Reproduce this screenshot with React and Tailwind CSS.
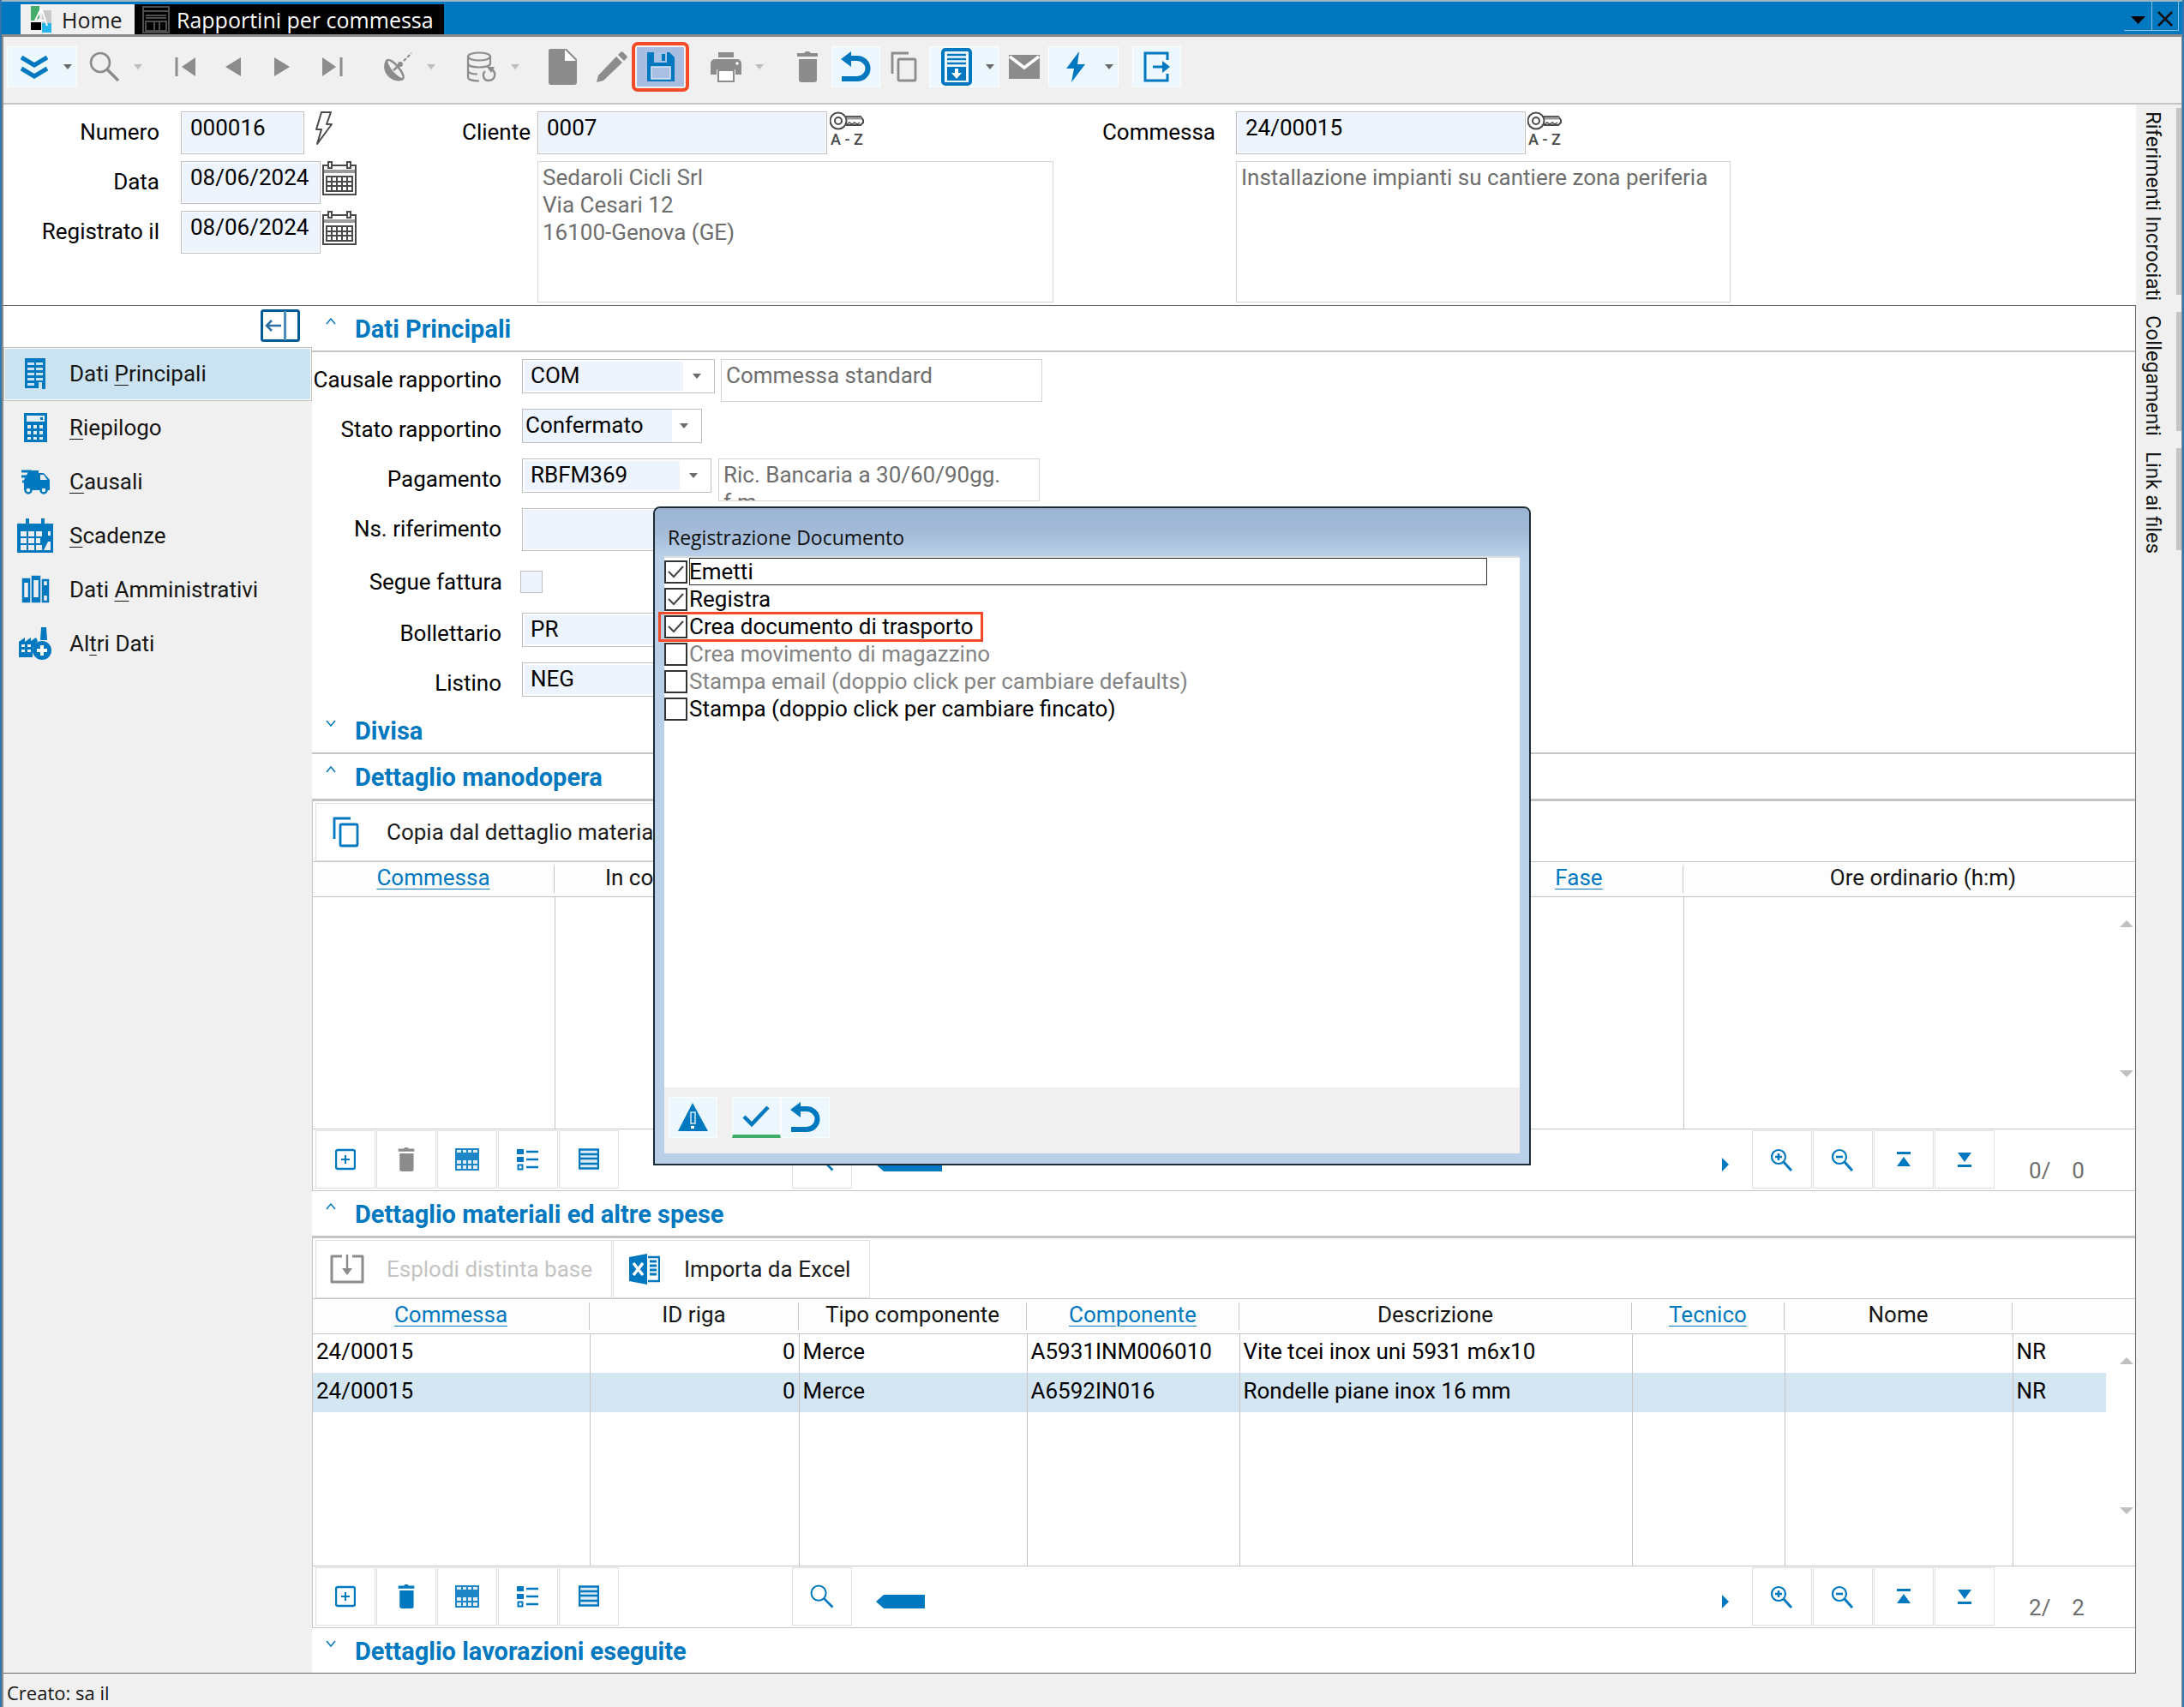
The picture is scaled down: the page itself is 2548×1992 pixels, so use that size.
import React from "react";

const BLUE = "#0078bf";
const GRAY = "#8c8c8c";

/* ---------- icons ---------- */

function Svg({ size = 36, w, h, box = "0 0 36 36", className = "", children }) {
  return (
    <svg aria-hidden="true" width={w || size} height={h || size} viewBox={box} className={"block shrink-0 " + className} fill="none">
      {children}
    </svg>
  );
}

const Caret = ({ color = "#6b6b6b" }) => (
  <Svg w={10} h={6} box="0 0 10 6">
    <path d="M0 0h10L5 6z" fill={color} />
  </Svg>
);

const DoubleDown = () => (
  <Svg>
    <path d="M3 7l15 9 15-9M3 20l15 9 15-9" stroke={BLUE} strokeWidth="5" />
  </Svg>
);

const SearchIcon = ({ color = GRAY, size = 36 }) => (
  <Svg size={size}>
    <circle cx="13" cy="13" r="11" stroke={color} strokeWidth="2.6" />
    <path d="M21 21l13 13" stroke={color} strokeWidth="3.4" />
  </Svg>
);

const FirstIcon = () => (
  <Svg>
    <path d="M7 7v22" stroke={GRAY} strokeWidth="3" />
    <path d="M29 7v22L13 18z" fill={GRAY} />
  </Svg>
);
const LastIcon = () => (
  <Svg>
    <path d="M28 7v22" stroke={GRAY} strokeWidth="3" />
    <path d="M6 7v22l16-11z" fill={GRAY} />
  </Svg>
);
const PrevIcon = () => (
  <Svg>
    <path d="M25 7v22L7 18z" fill={GRAY} />
  </Svg>
);
const NextIcon = () => (
  <Svg>
    <path d="M7 7v22l18-11z" fill={GRAY} />
  </Svg>
);

const SatelliteIcon = () => (
  <Svg>
    <path d="M5 9C1 14 1 22 6 28c5 6 13 8 19 5z" fill={GRAY} />
    <ellipse cx="15" cy="21" rx="4.5" ry="14" transform="rotate(-40 15 21)" fill="#efefef" stroke={GRAY} strokeWidth="2.4" />
    <path d="M13 22l8-7" stroke={GRAY} strokeWidth="2.4" />
    <circle cx="21" cy="15" r="3" fill={GRAY} />
    <path d="M25 11l9-9" stroke={GRAY} strokeWidth="2.2" strokeDasharray="4 2" />
  </Svg>
);

const DatabaseIcon = () => (
  <Svg>
    <ellipse cx="15" cy="6" rx="13" ry="4.5" stroke={GRAY} strokeWidth="2.2" />
    <path d="M2 6v24c0 3 6 4.500 13 4.500M28 6v9M2 14c0 3 6 4.500 13 4.500s13-1.500 13-4.500M2 22c0 3 5 4.500 11 4.500" stroke={GRAY} strokeWidth="2.2" />
    <path d="M22 23c-4 4-2 11 4 11 7 0 10-8 4-13" stroke={GRAY} strokeWidth="2.4" />
    <path d="M24 18l9 0-4 7z" fill={GRAY} />
  </Svg>
);

const FileIcon = () => (
  <Svg w={36} h={44} box="0 0 36 44">
    <path d="M3 1h19l12 12v27a3 3 0 0 1-3 3H4a3 3 0 0 1-3-3V3a2 2 0 0 1 2-2z" fill={GRAY} />
    <path d="M20 2v13h13z" fill="#fff" />
  </Svg>
);

const PencilIcon = () => (
  <Svg>
    <path d="M23 6l7 7L8 34l-8 2 2-8z" fill={GRAY} />
    <path d="M25 4l3-3c1-1 2-1 3 0l4 4c1 1 1 2 0 3l-3 3z" fill={GRAY} />
  </Svg>
);

const SaveIcon = () => (
  <Svg>
    <path d="M2 1h26l6 6v28H2z" fill={BLUE} />
    <path d="M10 1h15v12H10z" fill="#a9c3e6" />
    <path d="M19 3h4v8h-4z" fill={BLUE} />
    <path d="M7 18h22v14H7z" fill="#a9bfe3" stroke="#dbe6f5" strokeWidth="1.500" />
  </Svg>
);

const PrinterIcon = () => (
  <Svg>
    <path d="M9 1h18v6H9z" fill={GRAY} />
    <path d="M5 9h26a5 5 0 0 1 5 5v13h-7v-6H7v6H0V14a5 5 0 0 1 5-5z" fill={GRAY} />
    <path d="M9 22h18v13H9z" fill="#fff" stroke={GRAY} strokeWidth="2" />
    <circle cx="31" cy="14" r="1.800" fill="#fff" />
  </Svg>
);

const TrashIcon = ({ color = GRAY, size = 36 }) => (
  <Svg size={size}>
    <path d="M6 2h8l2-2h4l2 2h8v4H6z" fill={color} />
    <path d="M8 9h21v24a3 3 0 0 1-3 3H11a3 3 0 0 1-3-3z" fill={color} />
  </Svg>
);

const UndoIcon = () => (
  <Svg>
    <path d="M7 8h12a12 11.500 0 0 1 0 24H1" stroke={BLUE} strokeWidth="6" />
    <path d="M0 9L12 0v18z" fill={BLUE} />
  </Svg>
);

const CopyIcon = ({ color = GRAY }) => (
  <Svg>
    <path d="M3 26V2h19" stroke={color} strokeWidth="2.800" />
    <rect x="10" y="9" width="20" height="25" rx="1.500" stroke={color} strokeWidth="2.800" />
  </Svg>
);

const ArchiveIcon = () => (
  <Svg w={36} h={44} box="0 0 36 44">
    <rect x="2" y="2" width="32" height="40" rx="3" stroke={BLUE} strokeWidth="4" fill="#f2f9fe" />
    <path d="M7 8h22M7 13h22M7 18h22" stroke={BLUE} strokeWidth="2.500" />
    <path d="M7 22h22v16H7z" fill={BLUE} />
    <path d="M16 24h4v5h4l-6 7-6-7h4z" fill="#fff" />
  </Svg>
);

const MailIcon = () => (
  <Svg w={36} h={30} box="0 0 36 30">
    <path d="M0 1h36v28H0z" fill={GRAY} />
    <path d="M1 3l17 13L35 3" stroke="#fff" strokeWidth="3.500" />
  </Svg>
);

const BoltIcon = () => (
  <Svg>
    <path d="M22 0L7 20h9l-3 16 16-21h-9z" fill={BLUE} />
  </Svg>
);

const ExitIcon = () => (
  <Svg>
    <path d="M30 10V2H4v32h26v-8" stroke={BLUE} strokeWidth="3" />
    <path d="M13 18h14" stroke={BLUE} strokeWidth="3" />
    <path d="M24 11l9 7-9 7z" fill={BLUE} />
  </Svg>
);

const ZapOutline = () => (
  <Svg w={22} h={40} box="0 0 22 40">
    <path d="M8 1h11l-5 14h6L3 38l5-17H2z" stroke="#4a4a4a" strokeWidth="2" strokeLinejoin="round" />
  </Svg>
);

const CalendarIcon = () => (
  <Svg w={40} h={40} box="0 0 40 40">
    <path d="M1 5h38v34H1z" stroke="#4a4a4a" strokeWidth="2" fill="#fff" />
    <path d="M2 10h36v4H2z" fill="#9a9a9a" />
    <path d="M7 1h4v7H7zM29 1h4v7h-4z" fill="#fff" stroke="#4a4a4a" strokeWidth="2" />
    <path d="M5 18h30v17H5zM5 24h30M5 29h30M11 18v17M17 18v17M23 18v17M29 18v17" stroke="#4a4a4a" strokeWidth="2" />
  </Svg>
);

const KeyIcon = () => (
  <span className="flex w-[40px] flex-col items-center">
    <Svg w={40} h={22} box="0 0 40 22">
      <circle cx="10" cy="11" r="9.500" stroke="#4a4a4a" strokeWidth="2" />
      <circle cx="10" cy="11" r="4" stroke="#4a4a4a" strokeWidth="2" />
      <path d="M19 6h17l3 4v3l-3 3H19" stroke="#4a4a4a" strokeWidth="2" />
      <path d="M20 8h17" stroke="#9a9a9a" strokeWidth="3" />
      <path d="M20 15l3-2 3 2 3-2 3 2 3-2" stroke="#4a4a4a" strokeWidth="1.500" />
    </Svg>
    <span className="text-[18px] font-medium leading-[22px] text-[#4a4a4a]">A - Z</span>
  </span>
);

const CollapseIcon = () => (
  <Svg w={46} h={38} box="0 0 46 38">
    <rect x="1.500" y="1.500" width="43" height="35" rx="2" stroke="#005a96" strokeWidth="3" fill="#fff" />
    <path d="M28.500 2v34" stroke="#4b8fbf" strokeWidth="3" />
    <path d="M7 19h17M13 13l-6 6 6 6" stroke="#2b6fa3" strokeWidth="2.500" />
  </Svg>
);

const BuildingIcon = () => (
  <Svg w={42} h={40} box="0 0 42 40">
    <path d="M9 2h24v36h-4V30h-4v7H9z" fill={BLUE} />
    <path d="M12 7h8v3h-8zM22 7h8v3h-8zM12 13h8v3h-8zM22 13h8v3h-8zM12 19h8v3h-8zM22 19h8v3h-8zM12 25h8v3h-8zM22 25h8v3h-8zM12 31h8v3h-8z" fill="#cbe3f1" />
  </Svg>
);
const CalculatorIcon = () => (
  <Svg w={42} h={40} box="0 0 42 40">
    <path d="M8 3h27v34H8z" fill={BLUE} />
    <path d="M11 6h21v7H11z" fill="#e4eff7" />
    <path d="M27 8h3v3h-3z" fill={BLUE} />
    <path d="M12 17h4v4h-4zM19 17h4v4h-4zM26 17h4v4h-4zM12 24h4v4h-4zM19 24h4v4h-4zM26 24h4v4h-4zM12 31h4v3h-4zM19 31h4v3h-4zM26 31h4v3h-4z" fill="#e4eff7" />
  </Svg>
);
const TruckIcon = () => (
  <Svg w={42} h={40} box="0 0 42 40">
    <path d="M14 7h11v3h6l7 8v12H8V18z" fill={BLUE} />
    <path d="M5 8h12M5 14h8M6 20h6" stroke={BLUE} strokeWidth="3" />
    <path d="M27 12h4l4 6h-8z" fill="#efefef" />
    <circle cx="13" cy="30" r="3.500" fill="#efefef" stroke={BLUE} strokeWidth="2.500" />
    <circle cx="31" cy="30" r="3.500" fill="#efefef" stroke={BLUE} strokeWidth="2.500" />
  </Svg>
);
const ScheduleIcon = () => (
  <Svg w={42} h={42} box="0 0 42 42">
    <path d="M0 7h42v34H0z" fill={BLUE} />
    <path d="M12 1v8M30 1v8" stroke={BLUE} strokeWidth="4" />
    <path d="M4 16h7v6H4zM13 16h7v6h-7zM22 16h7v6h-7zM4 24h7v6H4zM13 24h7v6h-7zM22 24h5v6h-5zM4 32h7v6H4zM13 32h7v6h-7zM22 32h7v6h-7zM36 16h3v5h-3zM36 28h3v10h-8z" fill="#efefef" />
  </Svg>
);
const BindersIcon = () => (
  <Svg w={42} h={40} box="0 0 42 40">
    <path d="M7 8h7v26H7zM18 5h8v29h-8zM30 9h6v25h-6z" stroke={BLUE} strokeWidth="2.500" />
    <path d="M7 8h7v4H7zM18 5h8v4h-8zM30 15h6v12h-6zM8 29h6v4H8zM19 29h6v4h-6z" fill={BLUE} />
  </Svg>
);
const FactoryIcon = () => (
  <Svg w={42} h={42} box="0 0 42 42">
    <path d="M28 2h6l1 15h-8z" fill={BLUE} />
    <path d="M2 19l7-5v5l7-5v4l6-4 2 4-6 8v11H2z" fill={BLUE} />
    <path d="M5 22h4v3H5zM12 22h4v3h-4zM5 28h4v3H5zM12 28h4v3h-4z" fill="#efefef" />
    <circle cx="29" cy="29" r="11" fill={BLUE} />
    <path d="M27 23h4v4h4v4h-4v4h-4v-4h-4v-4h4z" fill="#fff" />
  </Svg>
);

const PlusBox = () => (
  <Svg w={24} h={26} box="0 0 24 26">
    <rect x="1" y="2" width="22" height="22" rx="2" stroke={BLUE} strokeWidth="2.400" />
    <path d="M12 8v10M7 13h10" stroke={BLUE} strokeWidth="2" />
  </Svg>
);
const TableIcon = () => (
  <Svg w={28} h={26} box="0 0 28 26">
    <path d="M0 0h28v26H0z" fill="#1c86c6" />
    <path d="M2 2h5v3H2zM9 2h4v3H9zM15 2h4v3h-4zM21 2h5v3h-5zM2 14h5v4H2zM9 14h4v4H9zM15 14h4v4h-4zM21 14h5v4h-5zM2 20h5v4H2zM9 20h4v4H9zM15 20h4v4h-4zM21 20h5v4h-5z" fill="#e1eef7" />
  </Svg>
);
const ListIcon = () => (
  <Svg w={26} h={26} box="0 0 26 26">
    <path d="M0 1h8v6H0zM0 10h8v6H0z" fill={BLUE} />
    <rect x="1.500" y="19.500" width="5" height="5" stroke={BLUE} strokeWidth="2" />
    <path d="M11 4h14M11 13h14M11 22h14" stroke={BLUE} strokeWidth="2.400" />
  </Svg>
);
const RowsIcon = () => (
  <Svg w={24} h={26} box="0 0 24 26">
    <path d="M1 1.500h22v22H1zM1 7h22M1 12h22M1 18h22" stroke={BLUE} strokeWidth="2.400" fill="#dcebf5" />
  </Svg>
);
const ZoomIcon = ({ plus }) => (
  <Svg w={27} h={27} box="0 0 27 27">
    <circle cx="9" cy="10" r="8" stroke={BLUE} strokeWidth="2.200" />
    <path d={plus ? "M9 6v8M5 10h8" : "M5 10h8"} stroke={BLUE} strokeWidth="2.600" />
    <path d="M15 16l9 10" stroke={BLUE} strokeWidth="3" />
  </Svg>
);
const ToTop = () => (
  <Svg w={16} h={18} box="0 0 16 18">
    <path d="M0 1.500h16" stroke={BLUE} strokeWidth="3" />
    <path d="M8 6l8 11H0z" fill={BLUE} />
  </Svg>
);
const ToBottom = () => (
  <Svg w={16} h={18} box="0 0 16 18">
    <path d="M0 16.500h16" stroke={BLUE} strokeWidth="3" />
    <path d="M8 12l8-11H0z" fill={BLUE} />
  </Svg>
);
const ExplodeIcon = () => (
  <Svg w={40} h={34} box="0 0 40 34">
    <path d="M14 2H2v30h36V2H26" stroke={GRAY} strokeWidth="3" strokeLinejoin="round" />
    <path d="M20 0v22" stroke={GRAY} strokeWidth="2.500" />
    <path d="M14 16h12l-6 8z" fill={GRAY} />
  </Svg>
);
const ExcelIcon = () => (
  <Svg w={36} h={36} box="0 0 36 36">
    <path d="M0 4l21-4v36L0 32z" fill={BLUE} />
    <path d="M5 11l11 14M16 11L5 25" stroke="#fff" strokeWidth="3.500" />
    <path d="M22 4h13v28H22" stroke={BLUE} strokeWidth="2.400" />
    <path d="M24 9h8M24 14h8M24 19h8M24 24h8" stroke={BLUE} strokeWidth="3" />
  </Svg>
);
const WarningIcon = () => (
  <Svg>
    <path d="M17 1l18 33H0z" fill={BLUE} />
    <path d="M15 12h5v13h-5z" stroke="#d8eaf6" strokeWidth="1.500" />
    <path d="M15 28h4v3h-4z" fill="#fff" />
  </Svg>
);
const CheckIcon = () => (
  <Svg>
    <path d="M3 18l9 9L31 7" stroke={BLUE} strokeWidth="4.500" />
  </Svg>
);

const TabLogo = () => (
  <Svg w={24} h={31} box="0 0 24 31">
    <path d="M0 0h10v14L5 17H0z" fill="#45ad6c" />
    <path d="M13 5h11v15H13z" fill="#c9c9c9" />
    <path d="M0 19h12v9H0z" fill="#000" />
    <path d="M13 20h11v11H13z" fill="#29b5ee" />
    <path d="M5 17L12 3M13 5l6 18M8 17h9" stroke="#fff" strokeWidth="2" />
  </Svg>
);
const TabForm = () => (
  <Svg w={32} h={32} box="0 0 32 32">
    <path d="M1 1h30v30H1zM1 6h30M4 11h24M4 14h24M4 18h24v11H4zM14 18v11M20 18v11" stroke="#4d4d4d" strokeWidth="2" />
  </Svg>
);

/* ---------- main toolbar ---------- */

function ToolButton({ label, active, caret, selected, children }) {
  const look = active
    ? "border-[#fbfdff] bg-[#ecf7fe]"
    : selected
    ? "rounded-xs border-[#eef3fb] bg-[#a8bde0] outline-4 outline-offset-1 outline-[#f44a27]"
    : "border-transparent";
  return (
    <button type="button" aria-label={label} title={label} className={"flex h-12 items-center border " + look + (caret ? " w-[82px] pl-[13px]" : " w-[57px] justify-center")}>
      {children}
      {caret && (
        <span className="ml-4">
          <Caret color={active ? "#6b6b6b" : "#bdbdbd"} />
        </span>
      )}
    </button>
  );
}

const Group = ({ children }) => <div className="flex">{children}</div>;

function Toolbar() {
  return (
    <div role="toolbar" aria-label="Comandi" className="flex h-[79px] items-start gap-4 border-b-2 border-[#c5c5c5] bg-[#f0f0f0] pl-1 pt-[11px]">
      <Group>
        <ToolButton label="Azioni" active caret><DoubleDown /></ToolButton>
        <ToolButton label="Cerca" caret><SearchIcon /></ToolButton>
      </Group>
      <Group>
        <ToolButton label="Primo"><FirstIcon /></ToolButton>
        <ToolButton label="Precedente"><PrevIcon /></ToolButton>
        <ToolButton label="Successivo"><NextIcon /></ToolButton>
        <ToolButton label="Ultimo"><LastIcon /></ToolButton>
      </Group>
      <ToolButton label="Ricerca estesa" caret><SatelliteIcon /></ToolButton>
      <ToolButton label="Aggiorna dati" caret><DatabaseIcon /></ToolButton>
      <Group>
        <ToolButton label="Nuovo"><FileIcon /></ToolButton>
        <ToolButton label="Modifica"><PencilIcon /></ToolButton>
        <ToolButton label="Salva" selected><SaveIcon /></ToolButton>
      </Group>
      <ToolButton label="Stampa" caret><PrinterIcon /></ToolButton>
      <Group>
        <ToolButton label="Elimina"><TrashIcon /></ToolButton>
        <ToolButton label="Annulla" active><UndoIcon /></ToolButton>
        <ToolButton label="Duplica"><CopyIcon /></ToolButton>
        <ToolButton label="Archivia" active caret><ArchiveIcon /></ToolButton>
        <ToolButton label="Invia email"><MailIcon /></ToolButton>
        <ToolButton label="Esegui" active caret><BoltIcon /></ToolButton>
      </Group>
      <ToolButton label="Esci" active><ExitIcon /></ToolButton>
    </div>
  );
}

/* ---------- form pieces ---------- */

const FIELD = "h-[50px] border border-[#c0c0c0] bg-[#edf4fd] px-[10px] pb-3 text-black outline-none ring-1 ring-inset ring-white";
const NOTE = "resize-none overflow-hidden border border-[#d4d4d4] bg-white px-[5px] pt-[2px] leading-8 text-[#6e6e6e] outline-none";

function HeaderForm() {
  return (
    <form className="flex h-[234px] bg-white pt-2">
      <div className="grid w-[500px] grid-cols-[182px_1fr] content-start gap-x-[25px] gap-y-2">
        <label htmlFor="numero" className="text-right leading-[48px]">Numero</label>
        <div className="flex gap-3">
          <input id="numero" defaultValue="000016" className={FIELD + " w-[144px]"} />
          <ZapOutline />
        </div>
        <label htmlFor="data" className="text-right leading-[48px]">Data</label>
        <div className="flex gap-[2px]">
          <input id="data" defaultValue="08/06/2024" className={FIELD + " w-[163px]"} />
          <CalendarIcon />
        </div>
        <label htmlFor="registrato" className="text-right leading-[48px]">Registrato il</label>
        <div className="flex gap-[2px]">
          <input id="registrato" defaultValue="08/06/2024" className={FIELD + " w-[163px]"} />
          <CalendarIcon />
        </div>
      </div>
      <div className="grid w-[725px] grid-cols-[115px_1fr] content-start gap-2">
        <label htmlFor="cliente" className="text-right leading-[48px]">Cliente</label>
        <div className="flex gap-[3px]">
          <input id="cliente" defaultValue="0007" className={FIELD + " w-[338px]"} />
          <KeyIcon />
        </div>
        <textarea aria-label="Indirizzo cliente" readOnly defaultValue={"Sedaroli Cicli Srl\nVia Cesari 12\n16100-Genova (GE)"} className={NOTE + " col-start-2 h-[165px]"} />
      </div>
      <div className="grid grid-cols-[189px_577px] content-start gap-x-6 gap-y-2">
        <label htmlFor="commessa" className="text-right leading-[48px]">Commessa</label>
        <div className="flex gap-[2px]">
          <input id="commessa" defaultValue="24/00015" className={FIELD + " w-[338px]"} />
          <KeyIcon />
        </div>
        <textarea aria-label="Descrizione commessa" readOnly defaultValue="Installazione impianti su cantiere zona periferia" className={NOTE + " col-start-2 h-[165px]"} />
      </div>
    </form>
  );
}

function Combo({ id, value, width, flush }) {
  return (
    <div className={"relative flex h-10 border border-[#c0c0c0] bg-white " + width + (flush ? "" : " p-[2px]")}>
      <select id={id} defaultValue={value} className={"mr-[34px] min-w-0 flex-1 appearance-none bg-[#edf4fd] pb-[2px] leading-7 text-black outline-none " + (flush ? "pl-[3px]" : "pl-[7px]")}>
        <option>{value}</option>
      </select>
      <span className="pointer-events-none absolute right-[15px] top-4">
        <Caret />
      </span>
    </div>
  );
}

function FormRow({ id, label, children }) {
  return (
    <div className="flex h-[50px] items-start">
      <label htmlFor={id} className="w-[221px] shrink-0 text-right leading-[49px]">{label}</label>
      <div className="ml-6 flex">{children}</div>
    </div>
  );
}

function SectionHeader({ title, open, thick, last }) {
  return (
    <h2 className={"box-content h-[52px] border-[#c5c5c5] bg-white " + (last ? "" : thick ? "border-b-3" : "border-b-2")}>
      <button type="button" aria-expanded={!!open} className="flex h-full w-full items-start pl-4 text-left text-[29px] font-bold text-[#0078bf]">
        <Svg w={12} h={8} box="0 0 12 8" className="mt-[14px]">
          <path d={open ? "M1 7l5-6 5 6" : "M1 1l5 6 5-6"} stroke={BLUE} strokeWidth="1.500" />
        </Svg>
        <span className="ml-[22px] leading-[54px]">{title}</span>
      </button>
    </h2>
  );
}

function MainData() {
  return (
    <section className="bg-white">
      <SectionHeader title="Dati Principali" open />
      <div className="flex flex-col gap-2 pb-[3px] pt-2">
        <FormRow id="causale" label="Causale rapportino">
          <Combo id="causale" value="COM" width="w-[225px]" />
          <textarea aria-label="Descrizione causale" readOnly rows={1} defaultValue="Commessa standard" className={NOTE + " ml-[7px] h-[50px] w-[375px]"} />
        </FormRow>
        <FormRow id="stato" label="Stato rapportino">
          <Combo id="stato" value="Confermato" width="w-[210px]" flush />
        </FormRow>
        <FormRow id="pagamento" label="Pagamento">
          <Combo id="pagamento" value="RBFM369" width="w-[221px]" />
          <textarea aria-label="Descrizione pagamento" readOnly rows={1} defaultValue={"Ric. Bancaria a 30/60/90gg.\nf.m."} className={NOTE + " ml-2 h-[50px] w-[375px]"} />
        </FormRow>
        <FormRow id="riferimento" label="Ns. riferimento">
          <input id="riferimento" className={FIELD + " w-[420px]"} />
        </FormRow>
        <div className="flex h-14 items-center">
          <label htmlFor="segue" className="w-[222px] text-right">Segue fattura</label>
          <input id="segue" type="checkbox" className="ml-[21px] size-[26px] appearance-none border border-[#c0c0c0] bg-[#edf4fd]" />
        </div>
        <FormRow id="bollettario" label="Bollettario">
          <Combo id="bollettario" value="PR" width="w-[225px]" />
        </FormRow>
        <FormRow id="listino" label="Listino">
          <Combo id="listino" value="NEG" width="w-[225px]" />
        </FormRow>
      </div>
    </section>
  );
}

/* ---------- grids ---------- */

const BoxButton = ({ label, children }) => (
  <button type="button" aria-label={label} title={label} className="flex h-[68px] w-[70px] items-center justify-center border border-[#dedede] bg-white">
    {children}
  </button>
);

function TextButton({ icon, children, disabled }) {
  return (
    <button type="button" disabled={disabled} className={"flex h-[68px] items-center border border-[#dedede] bg-white pr-[22px] " + (disabled ? "text-[#c4c4c4]" : "text-[#1c1c1c]")}>
      <span className="mr-[10px] flex w-[72px] justify-center">{icon}</span>
      {children}
    </button>
  );
}

const Arrow = ({ up }) => (
  <Svg w={16} h={8} box="0 0 16 8">
    <path d={up ? "M8 0l8 8H0z" : "M0 0h16L8 8z"} fill="#c0c0c0" />
  </Svg>
);

function DataGrid({ title, actions, columns, rows, selected, count, total, thumb, canDelete }) {
  return (
    <section className="bg-white">
      <SectionHeader title={title} open thick />
      <div className="border-l border-[#c5c5c5]">
        <div className="flex h-[70px] gap-[1px] pl-[3px] pt-[2px]">{actions}</div>
        <div className="relative h-[313px] overflow-hidden border-y border-[#c5c5c5]">
          <table className="h-full w-full table-fixed border-collapse">
            <colgroup>
              {columns.map((c, i) => (
                <col key={i} style={c.w ? { width: c.w } : undefined} />
              ))}
            </colgroup>
            <thead>
              <tr className="h-[40px] border-b border-[#c5c5c5] bg-[#fdfdfd]">
                {columns.map((c, i) => (
                  <th key={i} className="p-0 font-normal text-[#151515]">
                    <div className={"flex h-8 items-center justify-center pb-1 " + (i < columns.length - 1 ? "border-r border-[#c5c5c5] " : "") + (c.pad || "")}>
                      {c.link ? (
                        <a href="#" className="text-[#0078bf] underline decoration-1 underline-offset-4">{c.label}</a>
                      ) : (
                        c.label
                      )}
                    </div>
                  </th>
                ))}
              </tr>
            </thead>
            <tbody>
              {rows.map((r, ri) => (
                <tr key={ri} className={"h-[46px] " + (ri === selected ? "bg-[#d4e6f2]" : "")}>
                  {r.map((v, i) => (
                    <td key={i} className={"overflow-hidden whitespace-nowrap px-1 pb-1 pt-0 align-middle leading-8 text-black " + (i < columns.length - 1 ? "border-r border-[#c5c5c5] " : "") + (columns[i].right ? "text-right" : "")}>
                      {v}
                    </td>
                  ))}
                </tr>
              ))}
              <tr>
                {columns.map((c, i) => (
                  <td key={i} className={i < columns.length - 1 ? "border-r border-[#c5c5c5]" : ""} />
                ))}
              </tr>
            </tbody>
          </table>
          <div className="absolute bottom-0 right-0 top-[41px] flex w-[34px] flex-col items-end justify-between bg-white pb-[60px] pr-[2px] pt-[27px]">
            <Arrow up />
            <Arrow />
          </div>
        </div>
        <div className="flex h-[72px] items-start border-b border-[#c5c5c5] pl-[3px] pt-[1px]">
          <div className="flex gap-[1px]">
            <BoxButton label="Aggiungi riga"><PlusBox /></BoxButton>
            <BoxButton label="Elimina riga"><TrashIcon size={28} color={canDelete ? BLUE : GRAY} /></BoxButton>
            <BoxButton label="Griglia"><TableIcon /></BoxButton>
            <BoxButton label="Elenco"><ListIcon /></BoxButton>
            <BoxButton label="Righe"><RowsIcon /></BoxButton>
          </div>
          <div className="ml-[202px] flex flex-1 items-start">
            <BoxButton label="Cerca"><SearchIcon color={BLUE} size={28} /></BoxButton>
            <div className="ml-7 mt-8 flex flex-1 items-center justify-between">
              <span className="flex items-center">
                <Svg w={9} h={16} box="0 0 9 16"><path d="M9 0v16L0 8z" fill={BLUE} /></Svg>
                <span className={"h-4 bg-[#0078bf] " + thumb} />
              </span>
              <Svg w={8} h={16} box="0 0 8 16"><path d="M0 0v16l8-8z" fill={BLUE} /></Svg>
            </div>
          </div>
          <div className="ml-[27px] flex gap-[1px]">
            <BoxButton label="Ingrandisci"><ZoomIcon plus /></BoxButton>
            <BoxButton label="Riduci"><ZoomIcon /></BoxButton>
            <BoxButton label="Vai all'inizio"><ToTop /></BoxButton>
            <BoxButton label="Vai alla fine"><ToBottom /></BoxButton>
          </div>
          <div className="flex w-[164px] gap-[25px] pl-10 pt-[31px] leading-8 text-[#6e6e6e]">
            <span>{count}/</span>
            <span>{total}</span>
          </div>
        </div>
      </div>
    </section>
  );
}

/* ---------- side navigation ---------- */

const NAV = [
  { icon: <BuildingIcon />, pre: "Dati ", key: "P", post: "rincipali", active: true },
  { icon: <CalculatorIcon />, pre: "", key: "R", post: "iepilogo" },
  { icon: <TruckIcon />, pre: "", key: "C", post: "ausali" },
  { icon: <ScheduleIcon />, pre: "", key: "S", post: "cadenze" },
  { icon: <BindersIcon />, pre: "Dati ", key: "A", post: "mministrativi" },
  { icon: <FactoryIcon />, pre: "Al", key: "t", post: "ri Dati" },
];

function SideNav() {
  return (
    <nav className="w-[360px] shrink-0 bg-[#f0f0f0]">
      <div className="flex h-12 items-start justify-end bg-white pr-[14px] pt-1">
        <button type="button" aria-label="Riduci menu"><CollapseIcon /></button>
      </div>
      {NAV.map((n) => (
        <a key={n.key} href="#" className={"flex h-[63px] items-center border pb-[2px] pl-[15px] text-[#151515] " + (n.active ? "border-[#c0c0c0] bg-[#cbe3f1] ring-1 ring-inset ring-white" : "border-transparent")}>
          {n.icon}
          <span className="ml-[19px]">
            {n.pre}
            <span className="underline decoration-1 underline-offset-4">{n.key}</span>
            {n.post}
          </span>
        </a>
      ))}
    </nav>
  );
}

/* ---------- dialog ---------- */

const OPTIONS = [
  { label: "Emetti", checked: true, focus: true },
  { label: "Registra", checked: true },
  { label: "Crea documento di trasporto", checked: true, marked: true },
  { label: "Crea movimento di magazzino", muted: true },
  { label: "Stampa email (doppio click per cambiare defaults)", muted: true },
  { label: "Stampa (doppio click per cambiare fincato)" },
];

function Option({ label, checked, focus, marked, muted }) {
  return (
    <li className="relative flex h-8">
      <label className={"flex flex-1 items-center " + (muted ? "text-[#848484]" : "text-black")}>
        <span className="relative block size-[27px]">
          <input type="checkbox" defaultChecked={checked} className="peer block size-[27px] appearance-none border-2 border-[#333] bg-white" />
          <svg aria-hidden="true" viewBox="0 0 27 27" className="pointer-events-none absolute inset-0 hidden peer-checked:block" fill="none">
            <path d="M5 13l6 6L22 7" stroke="#444" strokeWidth="2" />
          </svg>
        </span>
        <span className={"ml-[2px] h-8 flex-1 leading-8 " + (focus ? "mr-[38px] outline-1 -outline-offset-1 outline-[#333]" : "")}>{label}</span>
      </label>
      {marked && <span className="pointer-events-none absolute -left-[7px] -top-[1px] h-[35px] w-[379px] border-3 border-[#f44a27]" />}
    </li>
  );
}

const DialogButton = ({ label, children, main }) => (
  <button type="button" aria-label={label} title={label} className={"flex h-12 w-[57px] items-center justify-center border border-[#fbfdff] bg-[#ecf7fe] " + (main ? "border-b-4 border-b-[#3fac68]" : "")}>
    {children}
  </button>
);

function RegisterDialog() {
  return (
    <div className="absolute inset-x-0 top-[591px] flex justify-center">
      <div role="dialog" aria-labelledby="dlg-title" className="w-[1024px] rounded-t-lg border-2 border-[#1b2a33] bg-[#bad0e9] px-[11px] pb-3">
        <h2 id="dlg-title" className="-mx-[11px] h-14 rounded-t-md bg-linear-to-b from-[#9ab4d2] via-[#a3bbd8] to-[#bad0e9] pl-[15px] pt-4 font-['Open_Sans',sans-serif] text-[23px] leading-9 text-[#111]">
          Registrazione Documento
        </h2>
        <ul className="h-[620px] border-t-2 border-[#dedede] bg-white">
          {OPTIONS.map((o) => (
            <Option key={o.label} {...o} />
          ))}
        </ul>
        <div className="flex h-[77px] items-start bg-[#f0f0f0] pl-[5px] pt-[11px]">
          <DialogButton label="Avvisi"><WarningIcon /></DialogButton>
          <span className="w-[17px]" />
          <DialogButton label="Conferma" main><CheckIcon /></DialogButton>
          <DialogButton label="Annulla"><UndoIcon /></DialogButton>
        </div>
      </div>
    </div>
  );
}

/* ---------- page ---------- */

function TitleBar() {
  return (
    <header className="flex h-[43px] items-stretch justify-between border-b-3 border-t-2 border-b-[#8a8a8a] border-t-[#9fb4c4] bg-[#0078bf] font-['Open_Sans',sans-serif] text-[25px]">
      <div className="flex pl-[22px] pt-[3px]">
        <button type="button" className="flex w-[133px] items-center bg-[#f0f0f0] pl-3 text-[#1c1c1c]">
          <TabLogo />
          <span className="ml-3 leading-8">Home</span>
        </button>
        <button type="button" className="flex items-center whitespace-nowrap bg-black pl-[9px] pr-3 text-white">
          <TabForm />
          <span className="ml-2 leading-8">Rapportini per commessa</span>
        </button>
      </div>
      <div className="flex h-[34px] pr-1">
        <button type="button" aria-label="Elenco schede" className="flex w-8 items-end justify-center border-b border-[#8cc0e2] pb-[7px]">
          <Svg w={17} h={9} box="0 0 17 9"><path d="M0 0h17L8.500 9z" fill="#000" /></Svg>
        </button>
        <button type="button" aria-label="Chiudi" className="flex w-8 items-end justify-center border-x border-b border-[#8cc0e2] pb-1">
          <Svg w={18} h={18} box="0 0 18 18"><path d="M1 1l16 16M17 1L1 17" stroke="#111" strokeWidth="2.500" /></Svg>
        </button>
      </div>
    </header>
  );
}

const SIDE_TABS = [
  { label: "Riferimenti Incrociati", h: "h-[218px]" },
  { label: "Collegamenti", h: "h-[139px]" },
  { label: "Link ai files", h: "h-[119px]" },
];

export default function App() {
  return (
    <div className="relative flex min-h-screen flex-col border-x-2 border-[#2f78ad] bg-[#f0f0f0] font-[Roboto,sans-serif] text-[26px] leading-8 text-black">
      <TitleBar />
      <div className="flex flex-1 flex-col border-l-2 border-r border-[#8c8c8c]">
        <Toolbar />
        <div className="flex flex-1">
          <main className="flex min-w-0 flex-1 flex-col">
            <HeaderForm />
            <div className="flex border border-l-0 border-[#666]">
              <SideNav />
              <div className="min-w-0 flex-1 bg-white">
                <MainData />
                <SectionHeader title="Divisa" />
                <DataGrid
                  title="Dettaglio manodopera"
                  actions={<TextButton icon={<CopyIcon color={BLUE} />}>Copia dal dettaglio materiali</TextButton>}
                  columns={[
                    { label: "Commessa", link: true, w: 282 },
                    { label: "In contratto", w: 252 },
                    { label: "", w: 822 },
                    { label: "Fase", link: true, w: 243 },
                    { label: "Ore ordinario (h:m)", pad: "pl-8" },
                  ]}
                  rows={[]}
                  count="0"
                  total="0"
                  thumb="w-[68px]"
                />
                <DataGrid
                  title="Dettaglio materiali ed altre spese"
                  actions={
                    <>
                      <TextButton icon={<ExplodeIcon />} disabled>Esplodi distinta base</TextButton>
                      <TextButton icon={<ExcelIcon />}>Importa da Excel</TextButton>
                    </>
                  }
                  columns={[
                    { label: "Commessa", link: true, w: 323 },
                    { label: "ID riga", w: 244, right: true },
                    { label: "Tipo componente", w: 266 },
                    { label: "Componente", link: true, w: 248 },
                    { label: "Descrizione", w: 458 },
                    { label: "Tecnico", link: true, w: 178 },
                    { label: "Nome", w: 266 },
                    { label: "" },
                  ]}
                  rows={[
                    ["24/00015", "0", "Merce", "A5931INM006010", "Vite tcei inox uni 5931 m6x10", "", "", "NR"],
                    ["24/00015", "0", "Merce", "A6592IN016", "Rondelle piane inox 16 mm", "", "", "NR"],
                  ]}
                  selected={1}
                  count="2"
                  total="2"
                  thumb="w-[48px]"
                  canDelete
                />
                <SectionHeader title="Dettaglio lavorazioni eseguite" last />
              </div>
            </div>
          </main>
          <aside className="flex w-[53px] flex-col items-end gap-5 pt-1">
            {SIDE_TABS.map((t) => (
              <button key={t.label} type="button" className={"flex w-12 justify-start border-r-6 border-[#c5c5c5] pr-3 pt-1 text-[24px] leading-[30px] whitespace-nowrap text-[#151515] [writing-mode:vertical-rl] " + t.h}>
                {t.label}
              </button>
            ))}
          </aside>
        </div>
        <footer className="h-[38px] pl-1 font-['Open_Sans',sans-serif] text-[22px] leading-[42px] text-[#151515]">Creato: sa il</footer>
      </div>
      <RegisterDialog />
    </div>
  );
}
